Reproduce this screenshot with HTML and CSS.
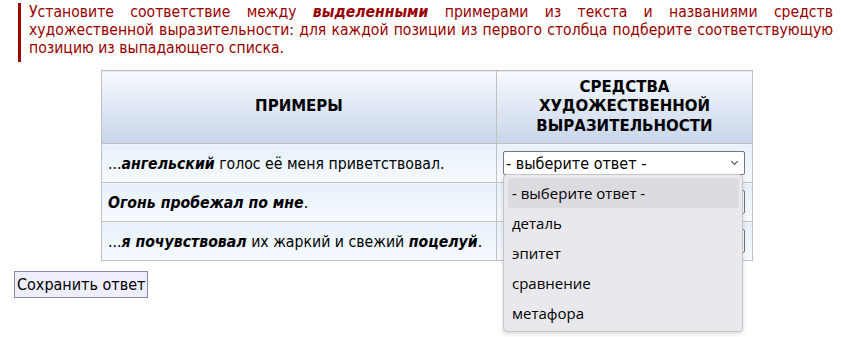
FILE: index.html
```html
<!DOCTYPE html>
<html lang="ru">
<head>
    <meta charset="UTF-8">
    <meta name="viewport" content="width=device-width, initial-scale=1.0">
    <title>Задание</title>
    <link rel="stylesheet" href="styles.css">
</head>
<body>
    <div class="task">
        Установите соответствие между <b><i>выделенными</i></b> примерами из текста и названиями средств художественной выразительности: для каждой позиции из первого столбца подберите соответствующую позицию из выпадающего списка.
    </div>

    <table class="match">
        <tr>
            <th class="col-ex">ПРИМЕРЫ</th>
            <th class="col-sel">СРЕДСТВА<br>ХУДОЖЕСТВЕННОЙ<br>ВЫРАЗИТЕЛЬНОСТИ</th>
        </tr>
        <tr>
            <td>...<b><i>ангельский</i></b> голос её меня приветствовал.</td>
            <td>
                <div class="select-wrap">
                    <div class="select">- выберите ответ -<span class="arrow"></span></div>
                    <!-- open list of the first select -->
                    <div class="popup">
                        <div class="opt active">- выберите ответ -</div>
                        <div class="opt">деталь</div>
                        <div class="opt">эпитет</div>
                        <div class="opt">сравнение</div>
                        <div class="opt">метафора</div>
                    </div>
                </div>
            </td>
        </tr>
        <tr>
            <td><b><i>Огонь пробежал по мне</i></b>.</td>
            <td><div class="select">- выберите ответ -<span class="arrow"></span></div></td>
        </tr>
        <tr>
            <td>...<b><i>я почувствовал</i></b> их жаркий и свежий <b><i>поцелуй</i></b>.</td>
            <td><div class="select">- выберите ответ -<span class="arrow"></span></div></td>
        </tr>
    </table>

    <button class="save">Сохранить ответ</button>
</body>
</html>
```

FILE: styles.css
```css
html, body{
    min-height: 100%;
    height: 100%;
}
body{
    margin: 0;
    font-family: "DejaVu Sans Condensed", "DejaVu Sans", sans-serif;
    font-size: 16px;
    color: #000;
}
.task{
    margin: 3px 8px 0 18px;
    padding: 0 0 5px 8px;
    border-left: 3px solid #a00000;
    color: #990000;
    font-size: 15.6px;
    line-height: 18px;
    text-align: justify;
}
.match{
    margin: 8px 0 0 101px;
    table-layout: fixed;
    border-collapse: collapse;
    border: 1px solid #c0c0c0;
}
.match th{
    height: 72px;
    padding: 0 6px;
    border: 1px solid #c0c0c0;
    background: linear-gradient(#f6f9fd, #c8d6ea);
    font-family: "DejaVu Sans", sans-serif;
    font-size: 15px;
    font-weight: bold;
    line-height: 19.5px;
    text-align: center;
}
.col-ex{
    width: 382px;
}
.col-sel{
    width: 243px;
}
.match td{
    height: 38px;
    padding: 0 7px 0 6px;
    border: 1px solid #c0c0c0;
    background: linear-gradient(#e6f0fa, #f6fafe);
    white-space: nowrap;
    font-size: 15.7px;
}
.select-wrap{
    position: relative;
}
.select{
    display: flex;
    align-items: center;
    height: 22px;
    padding: 0 0 0 2px;
    border: 1px solid #767676;
    border-radius: 2px;
    background: #fff;
    font-size: 16px;
    position: relative;
}
.arrow{
    position: absolute;
    right: 7px;
    top: 7px;
    width: 4px;
    height: 4px;
    border-right: 1px solid #444;
    border-bottom: 1px solid #444;
    transform: rotate(45deg);
}
.popup{
    position: absolute;
    left: 0;
    top: 23px;
    width: 231px;
    padding: 3px 3px 3px 4px;
    background: #e9e8ec;
    border: 1px solid #c6c6c6;
    border-radius: 4px;
    box-shadow: 0 2px 4px rgba(0,0,0,0.15);
    font-family: "Open Sans", "Noto Sans", sans-serif;
    font-size: 15px;
    z-index: 2;
}
.opt{
    height: 30px;
    line-height: 30px;
    padding-left: 4px;
    border-radius: 3px;
}
.opt.active{
    background: #dcdbe0;
}
.save{
    margin: 10px 0 0 14px;
    padding: 3px 2px;
    font-family: "DejaVu Sans Condensed", "DejaVu Sans", sans-serif;
    font-size: 16px;
    color: #000;
    background: #eeeeff;
    border: 1px solid #8888aa;
}
```
